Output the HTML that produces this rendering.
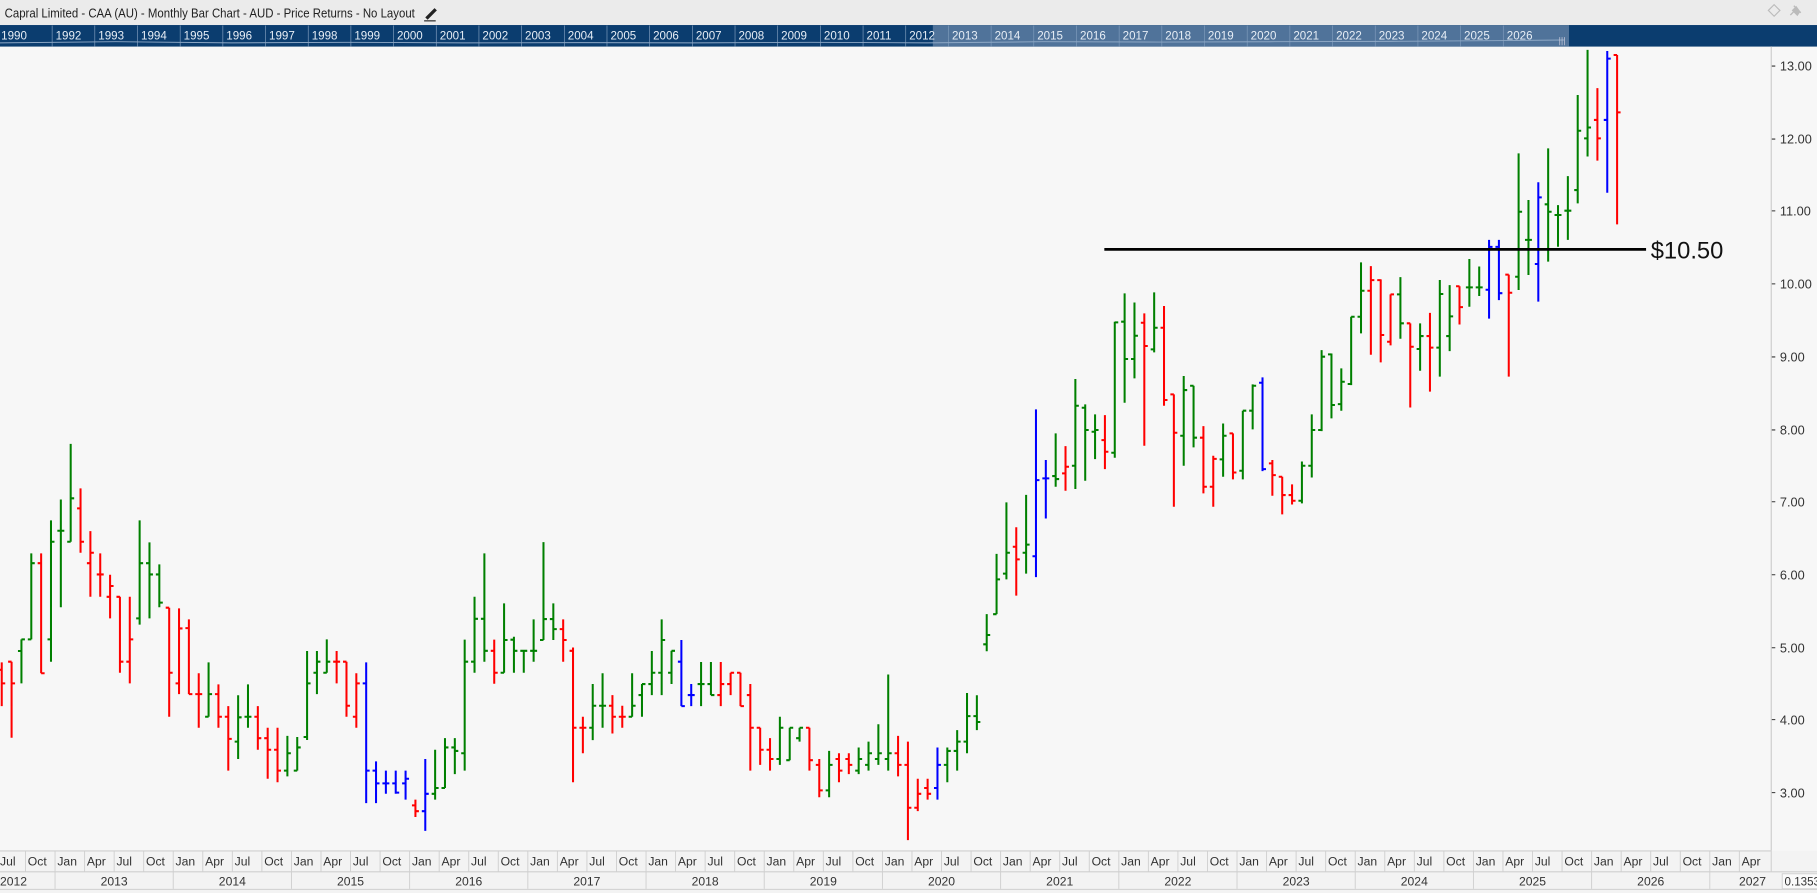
<!DOCTYPE html>
<html><head><meta charset="utf-8"><style>
html,body{margin:0;padding:0;background:#f7f7f7;overflow:hidden}
svg{display:block}
text{font-family:"Liberation Sans",sans-serif}
</style></head><body>
<svg width="1817" height="893" viewBox="0 0 1568 770.6" preserveAspectRatio="none" xmlns="http://www.w3.org/2000/svg">
<rect x="0" y="0" width="1568" height="770.6" fill="#f7f7f7"/>
<!-- title bar -->
<rect x="0" y="0" width="1568" height="21.6" fill="#ebebeb"/>
<text x="4" y="15" font-size="11.2" fill="#222" textLength="354" lengthAdjust="spacingAndGlyphs">Capral Limited - CAA (AU) - Monthly Bar Chart - AUD - Price Returns - No Layout</text>
<path d="M367 15 L375 7 L377 9 L369 17 Z" fill="#222"/><path d="M366 18H376" stroke="#222" stroke-width="1"/>
<path d="M1526 9 L1531 4 L1536 9 L1531 14 Z" fill="none" stroke="#bbb" stroke-width="1"/>
<path d="M1545 13 L1549 9 M1548 5 L1554 11 M1550 6 L1547 9 L1551 13 L1553 10 Z" fill="#bbb" stroke="#bbb" stroke-width="1.2"/>
<!-- navigator -->
<rect x="0" y="21.6" width="1568" height="18.6" fill="#0b3d6f"/>
<rect x="805" y="21.6" width="549" height="18.6" fill="#50739a"/>
<g stroke="#7d9abb" stroke-width="0.6">
<path d="M45 22V40M81.8 22V40M118.7 22V40M155.5 22V40M192.3 22V40M229.2 22V40M266 22V40M302.8 22V40M339.6 22V40M376.5 22V40M413.3 22V40M450.1 22V40M487 22V40M523.8 22V40M560.6 22V40M597.5 22V40M634.3 22V40M671.1 22V40M708 22V40M744.8 22V40M781.6 22V40M818.5 22V40M855.3 22V40M892.1 22V40M929 22V40M965.8 22V40M1002.6 22V40M1039.4 22V40M1076.3 22V40M1113.1 22V40M1150 22V40M1186.8 22V40M1223.6 22V40M1260.4 22V40M1297.3 22V40"/>
</g>
<polyline points="0,37 100,36 200,37 300,36.5 400,37 500,36.8 600,37 700,36.5 800,37 900,36 1000,36.3 1100,36 1200,35.7 1300,35 1350,34.5" fill="none" stroke="#8fa9c6" stroke-width="0.8"/>
<path d="M1346 32V39M1348 32V39M1350 32V39" stroke="#ccd" stroke-width="0.6"/>
<g font-size="10" fill="#e6edf5">
<text x="1" y="34">1990</text><text x="48" y="34">1992</text><text x="84.8" y="34">1993</text><text x="121.7" y="34">1994</text><text x="158.5" y="34">1995</text><text x="195.3" y="34">1996</text><text x="232.2" y="34">1997</text><text x="269" y="34">1998</text><text x="305.8" y="34">1999</text><text x="342.6" y="34">2000</text><text x="379.5" y="34">2001</text><text x="416.3" y="34">2002</text><text x="453.1" y="34">2003</text><text x="490" y="34">2004</text><text x="526.8" y="34">2005</text><text x="563.6" y="34">2006</text><text x="600.5" y="34">2007</text><text x="637.3" y="34">2008</text><text x="674.1" y="34">2009</text><text x="711" y="34">2010</text><text x="747.8" y="34">2011</text><text x="784.6" y="34">2012</text><text x="821.5" y="34">2013</text><text x="858.3" y="34">2014</text><text x="895.1" y="34">2015</text><text x="932" y="34">2016</text><text x="968.8" y="34">2017</text><text x="1005.6" y="34">2018</text><text x="1042.4" y="34">2019</text><text x="1079.3" y="34">2020</text><text x="1116.1" y="34">2021</text><text x="1153" y="34">2022</text><text x="1189.8" y="34">2023</text><text x="1226.6" y="34">2024</text><text x="1263.4" y="34">2025</text><text x="1300.3" y="34">2026</text>
</g>
<!-- right axis -->
<path d="M1528.5 40V734" stroke="#c8c8c8" stroke-width="0.9"/>
<g stroke="#333" stroke-width="0.9"><path d="M1529 57H1532M1529 120H1532M1529 182H1532M1529 245H1532M1529 308H1532M1529 371H1532M1529 433H1532M1529 496H1532M1529 559H1532M1529 621H1532M1529 684H1532"/></g>
<g font-size="11" fill="#333">
<text x="1536" y="61">13.00</text><text x="1536" y="124">12.00</text><text x="1536" y="186">11.00</text><text x="1536" y="249">10.00</text><text x="1536" y="312">9.00</text><text x="1536" y="375">8.00</text><text x="1536" y="437">7.00</text><text x="1536" y="500">6.00</text><text x="1536" y="563">5.00</text><text x="1536" y="625">4.00</text><text x="1536" y="688">3.00</text>
</g>
<!-- bars -->
<g fill="none" stroke-width="1.75">
<path stroke="#008000" d="M18.5 551.7V589.7M15.5 561.8H18.5M18.5 551.7H21.5M27 477.5V551.7M24 551.7H27M27 486H30M44 449V571M41 551.7H44M44 467.5H47M52.5 431V524M49.5 458H52.5M52.5 458H55.5M61 383V467.5M58 467.5H61M61 430H64M120.5 449V539M117.5 533.6H120.5M120.5 486H123.5M129 468V533.6M126 486H129M129 495.7H132M137.5 487V524M134.5 495.7H137.5M137.5 520H140.5M180 571.6V618.5M177 618.5H180M180 599H183M205.5 600V655M202.5 640H205.5M205.5 619H208.5M214 590.6V628M211 618.5H214M214 618.5H217M248 635V670M245 665H248M248 650H251M256.5 636V665M253.5 665H256.5M256.5 645H259.5M265 561.8V638.6M262 636H265M265 589.7H268M273.5 561.8V599M270.5 580.5H273.5M273.5 571H276.5M282 551.7V580.5M279 580.5H282M282 571H285M375.5 647V690M372.5 685H375.5M375.5 680H378.5M384 637V680M381 680H384M384 645H387M392.5 637V668M389.5 645H392.5M392.5 648H395.5M401 552V665M398 650H401M401 571H404M409.5 515V580.5M406.5 571H409.5M409.5 534H412.5M418 477.5V571M415 534H418M418 561.6H421M435 520.7V580.5M432 580.5H435M435 552.3H438M443.5 549.5V580.5M440.5 552H443.5M443.5 561.6H446.5M452 561.6V580.5M449 561.6H452M452 561.6H455M460.5 534.5V571M457.5 561.6H460.5M460.5 561.6H463.5M469 467.8V552.3M466 552.3H469M469 534.2H472M477.5 520.7V552.3M474.5 534.2H477.5M477.5 542.9H480.5M511.5 590.3V638.7M508.5 628H511.5M511.5 609H514.5M520 581V628M517 609H520M520 609H523M545.5 581V618.5M542.5 618.5H545.5M545.5 609H548.5M554 590.3V618.5M551 599.8H554M554 590.3H557M562.5 561.8V599.8M559.5 590.3H562.5M562.5 580.5H565.5M571 534.5V599.8M568 580.5H571M571 552.3H574M579.5 561.6V590.3M576.5 580.5H579.5M579.5 561.6H582.5M605 571.3V609.3M602 590.3H605M605 590.3H608M613.5 571.3V599.8M610.5 590.3H613.5M613.5 599.8H616.5M673 618.5V660M670 655H673M673 628H676M681.5 628V656M678.5 656H681.5M681.5 628H684.5M690 628V640M687 637H690M690 628H693M715.5 648V688M712.5 682H715.5M715.5 660H718.5M741 645V668M738 665H741M741 655H744M749.5 640V665M746.5 660H749.5M749.5 650H752.5M758 625V660M755 655H758M758 650H761M766.5 582V665M763.5 655H766.5M766.5 650H769.5M817.5 645V675M814.5 660H817.5M817.5 648H820.5M826 630V665M823 648H826M826 640H829M834.5 598V650M831.5 640H834.5M834.5 618H837.5M843 600V630M840 618H843M843 623H846M851.5 530V562M848.5 556H851.5M851.5 548H854.5M860 478V530M857 530H860M860 500H863M868.5 433.5V500M865.5 495H868.5M868.5 477H871.5M885.5 427V495M882.5 477H885.5M885.5 470H888.5M911 374V420M908 410.8H911M911 413.4H914M928 327V422M925 401.9H928M928 350.1H931M936.5 349V414.9M933.5 351.9H936.5M936.5 371.1H939.5M945 357.6V396.2M942 372.6H945M945 371.1H948M962 277.6V395M959 390.7H962M962 278.2H965M970.5 253.2V347.5M967.5 277.6H970.5M970.5 309.8H973.5M979 261V326.5M976 309.8H979M979 289.7H982M996 252.3V304.1M993 301.5H996M996 282.8H999M1021.5 324.5V401.9M1018.5 376H1021.5M1021.5 336.6H1024.5M1030 332.9V386.1M1027 332.9H1030M1030 377.7H1033M1055.5 365.4V411.4M1052.5 396.4H1055.5M1055.5 376H1058.5M1072.5 354.4V413.7M1069.5 406.2H1072.5M1072.5 354.4H1075.5M1081 331.7V370.5M1078 354.4H1081M1081 332.9H1084M1123.5 398.2V434.4M1120.5 432.1H1123.5M1123.5 401.9H1126.5M1132 357.6V412M1129 401.9H1132M1132 371.1H1135M1140.5 302.1V372M1137.5 371.1H1140.5M1140.5 307.8H1143.5M1149 305V361M1146 305.8H1149M1149 349.5H1152M1157.5 317.9V354.4M1154.5 348.7H1157.5M1157.5 329.4H1160.5M1166 273.3V332.3M1163 331.4H1166M1166 273.3H1169M1174.5 226.4V287.7M1171.5 273.3H1174.5M1174.5 250.9H1177.5M1208.5 239.1V292.3M1205.5 254H1208.5M1208.5 279H1211.5M1225.5 279V319.9M1222.5 301.2H1225.5M1225.5 290H1228.5M1242.5 241.6V325M1239.5 300H1242.5M1242.5 253.7H1245.5M1251 246V303M1248 290H1251M1251 273H1254M1268 223.5V264.7M1265 248H1268M1268 248H1271M1276.5 230V255.4M1273.5 248H1276.5M1276.5 248H1279.5M1310.5 132.3V250.3M1307.5 238.8H1310.5M1310.5 182.7H1313.5M1319 172.6V237.3M1316 207H1319M1319 207H1322M1336 128V225.8M1333 176.3H1336M1336 182.7H1339M1344.5 177V212.9M1341.5 185.5H1344.5M1344.5 185.5H1347.5M1353 152V207M1350 181.8H1353M1353 181.8H1356M1361.5 82V175.5M1358.5 164H1361.5M1361.5 112.8H1364.5M1370 43V135M1367 119.4H1370M1370 110H1373"/>
<path stroke="#ff0000" d="M1.5 571.6V609.3M-1.5 578H1.5M1.5 589.7H4.5M10 571V636.6M7 571H10M10 589.7H13M35.5 477.5V581M32.5 486H35.5M35.5 581H38.5M69.5 421.4V477M66.5 438.7H69.5M69.5 467.5H72.5M78 458.3V515M75 486H78M78 477H81M86.5 477.5V515M83.5 495.7H86.5M86.5 495.7H89.5M95 496V533.6M92 515H95M95 505.7H98M103.5 515V580.5M100.5 515H103.5M103.5 571H106.5M112 515V589.7M109 571H112M112 551.7H115M146 524.4V618.5M143 524.4H146M146 580.5H149M154.5 525V599M151.5 589.7H154.5M154.5 542.3H157.5M163 534.5V599M160 542H163M163 599H166M171.5 581V628M168.5 599H171.5M171.5 599H174.5M188.5 590.6V628M185.5 599H188.5M188.5 618.5H191.5M197 609.3V665M194 618.5H197M197 637.6H200M222.5 609.3V647M219.5 618.5H222.5M222.5 637H225.5M231 628V672M228 637H231M231 647H234M239.5 628V675M236.5 647H239.5M239.5 665H242.5M290.5 561.8V589.7M287.5 571H290.5M290.5 571H293.5M299 571V618.5M296 571H299M299 609H302M307.5 581V628M304.5 618.5H307.5M307.5 589.7H310.5M358.5 690V705M355.5 695H358.5M358.5 700H361.5M426.5 552V590M423.5 561.6H426.5M426.5 580.5H429.5M486 534.5V571M483 542.9H486M486 552.3H489M494.5 558.7V675M491.5 561.6H494.5M494.5 628H497.5M503 618.5V650M500 628H503M503 628H506M528.5 599.8V633M525.5 609H528.5M528.5 618.5H531.5M537 609V628M534 618.5H537M537 618.5H540M622 571.3V609.3M619 599.8H622M622 590.3H625M630.5 580.5V599.8M627.5 590.3H630.5M630.5 580.5H633.5M639 580.5V609.3M636 580.5H639M639 609.3H642M647.5 590.3V665M644.5 599.8H647.5M647.5 628H650.5M656 628V660M653 628H656M656 647H659M664.5 637V665M661.5 647H664.5M664.5 655H667.5M698.5 628V665M695.5 628H698.5M698.5 656H701.5M707 655V688M704 660H707M707 682H710M724 650V675M721 655H724M724 665H727M732.5 650V668M729.5 655H732.5M732.5 660H735.5M775 635V670M772 650H775M775 660H778M783.5 640V725M780.5 660H783.5M783.5 697H786.5M792 672V700M789 697H792M792 685H795M800.5 672V690M797.5 680H800.5M800.5 685H803.5M877 455V514M874 471.8H877M877 482.7H880M919.5 385V423.5M916.5 408.5H919.5M919.5 402.8H922.5M953.5 358.2V404.8M950.5 379.8H953.5M953.5 389.8H956.5M987.5 270.4V384.6M984.5 278.5H987.5M987.5 298.6H990.5M1004.5 264.1V350.1M1001.5 282.8H1004.5M1004.5 345.2H1007.5M1013 340.3V437.3M1010 340.3H1013M1013 373.4H1016M1038.5 367.7V425.8M1035.5 377.7H1038.5M1038.5 420H1041.5M1047 393.3V437.3M1044 420H1047M1047 396H1050M1064 374V413.7M1061 374H1064M1064 407.7H1067M1098 397V427.8M1095 399.9H1098M1098 410H1101M1106.5 411.4V443.9M1103.5 411.4H1106.5M1106.5 427.2H1109.5M1115 418V435.3M1112 427.2H1115M1115 432.1H1118M1183 229.6V306.1M1180 250.9H1183M1183 241.7H1186M1191.5 241.1V312.7M1188.5 241.7H1191.5M1191.5 289.1H1194.5M1200 254V298M1197 294.9H1200M1200 254H1203M1217 279V351.6M1214 279H1217M1217 299.2H1220M1234 270V338M1231 290H1234M1234 300H1237M1259.5 247V280M1256.5 247H1259.5M1259.5 265H1262.5M1302 237V325M1299 237H1302M1302 252.6H1305M1378.5 76V138.6M1375.5 103.5H1378.5M1378.5 119.4H1381.5M1395.5 47.5V193.6M1392.5 47.5H1395.5M1395.5 97H1398.5"/>
<path stroke="#0000ff" d="M316 571.6V693M313 589.7H316M316 665H319M324.5 657V693M321.5 665H324.5M324.5 676H327.5M333 665V685M330 676H333M333 676H336M341.5 665V685M338.5 676H341.5M341.5 684H344.5M350 665V690M347 676H350M350 672H353M367 655V717M364 700H367M367 685H370M588 552.3V609.3M585 571H588M588 609.3H591M596.5 590.3V609.3M593.5 599.8H596.5M596.5 599.8H599.5M809 645V690M806 680H809M809 660H812M894 353.3V498M891 480H894M894 414.3H897M902.5 397V447.4M899.5 412.8H902.5M902.5 412.8H905.5M1089.5 325.7V406.5M1086.5 330.3H1089.5M1089.5 404.8H1092.5M1285 207V275M1282 250H1285M1285 213H1288M1293.5 207V259M1290.5 213H1293.5M1293.5 253H1296.5M1327.5 157.3V260.3M1324.5 227.8H1327.5M1327.5 170.3H1330.5M1387 44V166.3M1384 103.5H1387M1387 50.6H1390"/>
</g>
<!-- horizontal line -->
<path d="M953 215.2H1420.5" stroke="#000" stroke-width="2.4"/>
<text x="1424.5" y="223" font-size="20.5" fill="#111">$10.50</text>
<!-- bottom axis -->
<rect x="0" y="734" width="1568" height="36.6" fill="#f3f3f3"/>
<path d="M0 734.3H1528.5M0 752.3H1568M0 767.5H1568" stroke="#cfcfcf" stroke-width="0.9"/>
<path d="M1528.5 734V752" stroke="#cfcfcf" stroke-width="0.9"/>
<g stroke="#cfcfcf" stroke-width="0.8">
<path d="M22 734V752M47.5 734V752M73 734V752M98.5 734V752M124 734V752M149.5 734V752M175 734V752M200.5 734V752M226 734V752M251.5 734V752M277 734V752M302.5 734V752M328 734V752M353.5 734V752M379 734V752M404.5 734V752M430 734V752M455.5 734V752M481 734V752M506.5 734V752M532 734V752M557.5 734V752M583 734V752M608.5 734V752M634 734V752M659.5 734V752M685 734V752M710.5 734V752M736 734V752M761.5 734V752M787 734V752M812.5 734V752M838 734V752M863.5 734V752M889 734V752M914.5 734V752M940 734V752M965.5 734V752M991 734V752M1016.5 734V752M1042 734V752M1067.5 734V752M1093 734V752M1118.5 734V752M1144 734V752M1169.5 734V752M1195 734V752M1220.5 734V752M1246 734V752M1271.5 734V752M1297 734V752M1322.5 734V752M1348 734V752M1373.5 734V752M1399 734V752M1424.5 734V752M1450 734V752M1475.5 734V752M1501 734V752"/>
<path d="M47.5 752V767M149.5 752V767M251.5 752V767M353.5 752V767M455.5 752V767M557.5 752V767M659.5 752V767M761.5 752V767M863.5 752V767M965.5 752V767M1067.5 752V767M1169.5 752V767M1271.5 752V767M1373.5 752V767M1475.5 752V767"/>
</g>
<g font-size="10.5" fill="#333">
<text x="0" y="747">Jul</text><text x="24" y="747">Oct</text><text x="49.5" y="747">Jan</text><text x="75" y="747">Apr</text><text x="100.5" y="747">Jul</text><text x="126" y="747">Oct</text><text x="151.5" y="747">Jan</text><text x="177" y="747">Apr</text><text x="202.5" y="747">Jul</text><text x="228" y="747">Oct</text><text x="253.5" y="747">Jan</text><text x="279" y="747">Apr</text><text x="304.5" y="747">Jul</text><text x="330" y="747">Oct</text><text x="355.5" y="747">Jan</text><text x="381" y="747">Apr</text><text x="406.5" y="747">Jul</text><text x="432" y="747">Oct</text><text x="457.5" y="747">Jan</text><text x="483" y="747">Apr</text><text x="508.5" y="747">Jul</text><text x="534" y="747">Oct</text><text x="559.5" y="747">Jan</text><text x="585" y="747">Apr</text><text x="610.5" y="747">Jul</text><text x="636" y="747">Oct</text><text x="661.5" y="747">Jan</text><text x="687" y="747">Apr</text><text x="712.5" y="747">Jul</text><text x="738" y="747">Oct</text><text x="763.5" y="747">Jan</text><text x="789" y="747">Apr</text><text x="814.5" y="747">Jul</text><text x="840" y="747">Oct</text><text x="865.5" y="747">Jan</text><text x="891" y="747">Apr</text><text x="916.5" y="747">Jul</text><text x="942" y="747">Oct</text><text x="967.5" y="747">Jan</text><text x="993" y="747">Apr</text><text x="1018.5" y="747">Jul</text><text x="1044" y="747">Oct</text><text x="1069.5" y="747">Jan</text><text x="1095" y="747">Apr</text><text x="1120.5" y="747">Jul</text><text x="1146" y="747">Oct</text><text x="1171.5" y="747">Jan</text><text x="1197" y="747">Apr</text><text x="1222.5" y="747">Jul</text><text x="1248" y="747">Oct</text><text x="1273.5" y="747">Jan</text><text x="1299" y="747">Apr</text><text x="1324.5" y="747">Jul</text><text x="1350" y="747">Oct</text><text x="1375.5" y="747">Jan</text><text x="1401" y="747">Apr</text><text x="1426.5" y="747">Jul</text><text x="1452" y="747">Oct</text><text x="1477.5" y="747">Jan</text><text x="1503" y="747">Apr</text>
</g>
<g font-size="10.5" fill="#333" text-anchor="middle">
<text x="0" y="764" text-anchor="start">2012</text><text x="98.5" y="764">2013</text><text x="200.5" y="764">2014</text><text x="302.5" y="764">2015</text><text x="404.5" y="764">2016</text><text x="506.5" y="764">2017</text><text x="608.5" y="764">2018</text><text x="710.5" y="764">2019</text><text x="812.5" y="764">2020</text><text x="914.5" y="764">2021</text><text x="1016.5" y="764">2022</text><text x="1118.5" y="764">2023</text><text x="1220.5" y="764">2024</text><text x="1322.5" y="764">2025</text><text x="1424.5" y="764">2026</text><text x="1524" y="764" text-anchor="end">2027</text>
</g>
<rect x="1538" y="754" width="32" height="13" fill="#fafafa" stroke="#cfcfcf" stroke-width="0.8"/>
<text x="1540" y="764" font-size="10" fill="#333">0.1353</text>
</svg>
</body></html>
